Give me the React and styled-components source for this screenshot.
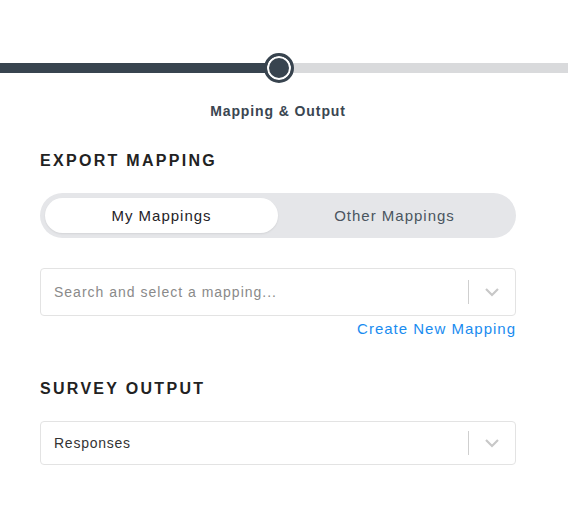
import React from 'react';
import styled, { createGlobalStyle } from 'styled-components';

const GlobalStyle = createGlobalStyle`
  body {
    margin: 0;
    background: #fff;
    font-family: "Liberation Sans", Arial, sans-serif;
  }
`;

const Page = styled.div`
  width: 568px;
  height: 531px;
  overflow: hidden;
`;

const Stepper = styled.div`
  padding-top: 53px;
  display: flex;
  flex-direction: column;
`;

const Track = styled.div`
  height: 30px;
  display: flex;
  align-items: center;
  position: relative;
`;

const Segment = styled.div`
  height: 10px;
  background: ${p => (p.done ? '#38444f' : '#d9dadc')};
  width: ${p => p.w}px;
  flex: ${p => (p.w ? 'none' : '1')};
`;

const Knob = styled.div`
  position: absolute;
  left: 264px;
  top: 0;
  width: 30px;
  height: 30px;
  box-sizing: border-box;
  border-radius: 50%;
  background: #38444f;
  border: 3px solid #38444f;
  box-shadow: inset 0 0 0 2px #fff;
`;

const StepLabel = styled.div`
  width: 556px;
  text-align: center;
  margin-top: 20px;
  font-size: 14px;
  font-weight: bold;
  color: #3a4651;
  letter-spacing: 0.9px;
`;

const Content = styled.div`
  padding: 0 52px 0 40px;
  display: flex;
  flex-direction: column;
`;

const Heading = styled.h2`
  margin: ${p => p.top}px 0 0;
  font-size: 16px;
  font-weight: bold;
  letter-spacing: 2.3px;
  color: #222;
  line-height: 20px;
`;

const Toggle = styled.div`
  margin-top: 22px;
  height: 45px;
  box-sizing: border-box;
  padding: 5px;
  border-radius: 23px;
  background: #e5e6e9;
  display: flex;
`;

const ToggleOption = styled.div`
  flex: 1;
  display: flex;
  align-items: center;
  justify-content: center;
  border-radius: 18px;
  font-size: 15px;
  letter-spacing: 1px;
  background: ${p => (p.active ? '#fff' : 'transparent')};
  color: ${p => (p.active ? '#1f2328' : '#4a5560')};
  box-shadow: ${p => (p.active ? '0 1px 2px rgba(0,0,0,0.08)' : 'none')};
`;

const Select = styled.div`
  margin-top: ${p => p.top}px;
  height: ${p => p.h}px;
  box-sizing: border-box;
  border: 1px solid #e3e3e3;
  border-radius: 4px;
  display: flex;
  align-items: center;
  padding-left: 13px;
`;

const SelectValue = styled.div`
  flex: 1;
  font-size: 14px;
  color: ${p => (p.placeholder ? '#8a8a8a' : '#333')};
  letter-spacing: ${p => (p.placeholder ? '1px' : '0.75px')};
`;

const Divider = styled.div`
  width: 1px;
  height: 24px;
  background: #cfcfcf;
`;

const Chevron = styled.div`
  width: 46px;
  display: flex;
  justify-content: center;
  align-items: center;
`;

const LinkRow = styled.div`
  display: flex;
  justify-content: flex-end;
  margin-top: 4px;
`;

const Link = styled.a`
  font-size: 15px;
  color: #1a8cf0;
  text-decoration: none;
  letter-spacing: 1px;
`;

const ChevronIcon = () => (
  <svg width="16" height="10" viewBox="0 0 16 10">
    <path d="M2 2l6 6 6-6" fill="none" stroke="#c8c8c8" strokeWidth="2.2" />
  </svg>
);

const App = () => {
  return (
    <Page>
      <GlobalStyle />
      <Stepper>
        <Track>
          <Segment done w={279} />
          <Segment />
          <Knob />
        </Track>
        <StepLabel>Mapping &amp; Output</StepLabel>
      </Stepper>
      <Content>
        <Heading top={32}>EXPORT MAPPING</Heading>
        <Toggle>
          <ToggleOption active>My Mappings</ToggleOption>
          <ToggleOption>Other Mappings</ToggleOption>
        </Toggle>
        <Select top={30} h={48}>
          <SelectValue placeholder>Search and select a mapping...</SelectValue>
          <Divider />
          <Chevron><ChevronIcon /></Chevron>
        </Select>
        <LinkRow>
          <Link href="#">Create New Mapping</Link>
        </LinkRow>
        <Heading top={42}>SURVEY OUTPUT</Heading>
        <Select top={22} h={44}>
          <SelectValue>Responses</SelectValue>
          <Divider />
          <Chevron><ChevronIcon /></Chevron>
        </Select>
      </Content>
    </Page>
  );
};

export default App;
